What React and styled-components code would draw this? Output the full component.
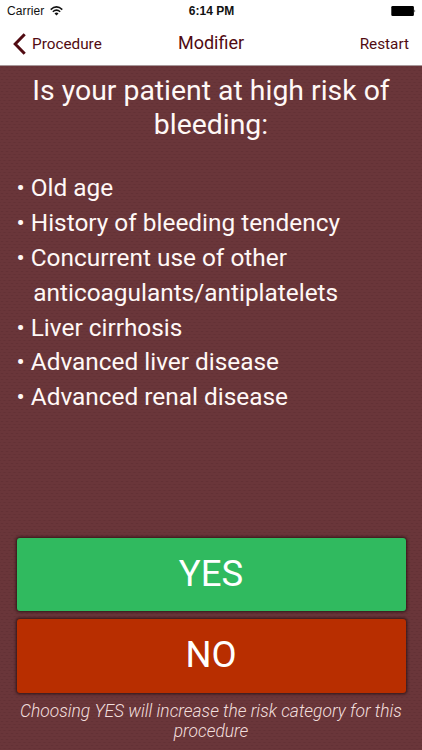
import React from 'react';
import styled, { createGlobalStyle } from 'styled-components';

const GlobalStyle = createGlobalStyle`
      * {
            box-sizing: border-box;
            margin: 0;
            padding: 0;
      }
      body {
            font-family: Roboto, sans-serif;
            background-color: #69343a;
      }
`;
const Screen = styled.div`
      width: 422px;
      height: 750px;
      display: flex;
      flex-direction: column;
      overflow: hidden;
`;
const StatusBar = styled.div`
      height: 22px;
      padding: 0 6px 0 7px;
      display: grid;
      grid-template-columns: 1fr auto 1fr;
      align-items: center;
      background-color: white;
      color: #111;
      font-family: "Liberation Sans", Arial, sans-serif;
      font-size: 12px;
`;
const Carrier = styled.div`
      display: flex;
      align-items: center;
      gap: 6px;
      letter-spacing: 0.1px;
`;
const Clock = styled.span`
      font-weight: bold;
      font-size: 12px;
`;
const Battery = styled.svg`
      justify-self: end;
`;
const NavBar = styled.nav`
      height: 44px;
      padding: 0 13px;
      display: grid;
      grid-template-columns: 1fr auto 1fr;
      align-items: center;
      background-color: white;
      border-bottom: 1px solid #a8989a;
`;
const NavButton = styled.button`
      border: none;
      background: none;
      display: flex;
      align-items: center;
      gap: 6px;
      justify-self: ${({ $side }) => $side};
      color: #510b12;
      font-family: inherit;
      font-size: 15.3px;
      cursor: pointer;
`;
const NavTitle = styled.h1`
      color: #510b12;
      font-size: 18px;
      font-weight: 400;
      line-height: 20px;
      padding-bottom: 2px;
`;
const Content = styled.main`
      flex: 1;
      padding: 8px 16.5px 0;
      display: flex;
      flex-direction: column;
      color: #fff8f6;
      background-color: #6a363a;
      background-image:
            radial-gradient(ellipse 2px 1px at 2px 1.5px, rgba(50, 15, 20, 0.16), transparent),
            radial-gradient(ellipse 2px 1px at 2px 1.5px, rgba(50, 15, 20, 0.16), transparent);
      background-size: 5px 6px;
      background-position: 0 0, 2.5px 3px;
`;
const Question = styled.h2`
      margin: 0 -8px;
      padding: 0 8px;
      font-size: 28.4px;
      font-weight: 400;
      line-height: 33.6px;
      text-align: center;
`;
const RiskList = styled.ul`
      margin-top: 30.3px;
      flex: 1;
      list-style: none;
      font-size: 24.4px;
      line-height: 34.8px;
`;
const Risk = styled.li`
      display: flex;
      gap: 6px;
`;
const Continued = styled.div`
      padding-left: 2.5px;
`;
const Answer = styled.button`
      height: 73.5px;
      flex: none;
      margin-bottom: 8px;
      padding-bottom: 2px;
      border: none;
      border-radius: 3px;
      background-color: ${({ $color }) => $color};
      box-shadow: 0 0 3px 1px rgba(30, 10, 12, 0.75);
      color: white;
      font-family: inherit;
      font-size: 36.5px;
      cursor: pointer;
`;
const Note = styled.p`
      height: 49.4px;
      flex: none;
      color: #f2dfdd;
      font-size: 17.4px;
      font-style: italic;
      font-weight: 300;
      line-height: 20.4px;
      text-align: center;
`;

const risks = [
      ['Old age'],
      ['History of bleeding tendency'],
      ['Concurrent use of other', 'anticoagulants/antiplatelets'],
      ['Liver cirrhosis'],
      ['Advanced liver disease'],
      ['Advanced renal disease'],
];

const App = () => {
      return (
            <>
                  <GlobalStyle />
                  <Screen>
                        <StatusBar>
                              <Carrier>
                                    Carrier
                                    <svg width="13" height="10" viewBox="0 0 13 10" fill="none" stroke="#111" strokeWidth="1.5">
                                          <path d="M0.7 3.6Q6.5 -1.8 12.3 3.6" />
                                          <path d="M2.8 5.8Q6.5 2.4 10.2 5.8" />
                                          <path d="M6.5 9.5L4.5 7.4Q6.5 5.8 8.5 7.4Z" fill="#111" stroke="none" />
                                    </svg>
                              </Carrier>
                              <Clock>6:14 PM</Clock>
                              <Battery width="25" height="10" viewBox="0 0 25 10">
                                    <rect x="0.3" y="0" width="22.6" height="10" rx="1.3" />
                                    <path d="M23.5 3.5Q25 5 23.5 6.5Z" />
                              </Battery>
                        </StatusBar>

                        <NavBar>
                              <NavButton $side="start">
                                    <svg width="13" height="22" viewBox="0 0 13 22" fill="none" stroke="#510b12" strokeWidth="3">
                                          <path d="M11.7 1.2L2.2 11L11.7 20.8" />
                                    </svg>
                                    Procedure
                              </NavButton>
                              <NavTitle>Modifier</NavTitle>
                              <NavButton $side="end">Restart</NavButton>
                        </NavBar>

                        <Content>
                              <Question>Is your patient at high risk of bleeding:</Question>

                              <RiskList>
                                    {risks.map(([first, second]) => (
                                          <Risk key={first}>
                                                <span>•</span>
                                                <div>
                                                      {first}
                                                      {second && <Continued>{second}</Continued>}
                                                </div>
                                          </Risk>
                                    ))}
                              </RiskList>

                              <Answer $color="#30ba5f">YES</Answer>
                              <Answer $color="#b82e00">NO</Answer>
                              <Note>Choosing YES will increase the risk category for this procedure</Note>
                        </Content>
                  </Screen>
            </>
      )
}

export default App
